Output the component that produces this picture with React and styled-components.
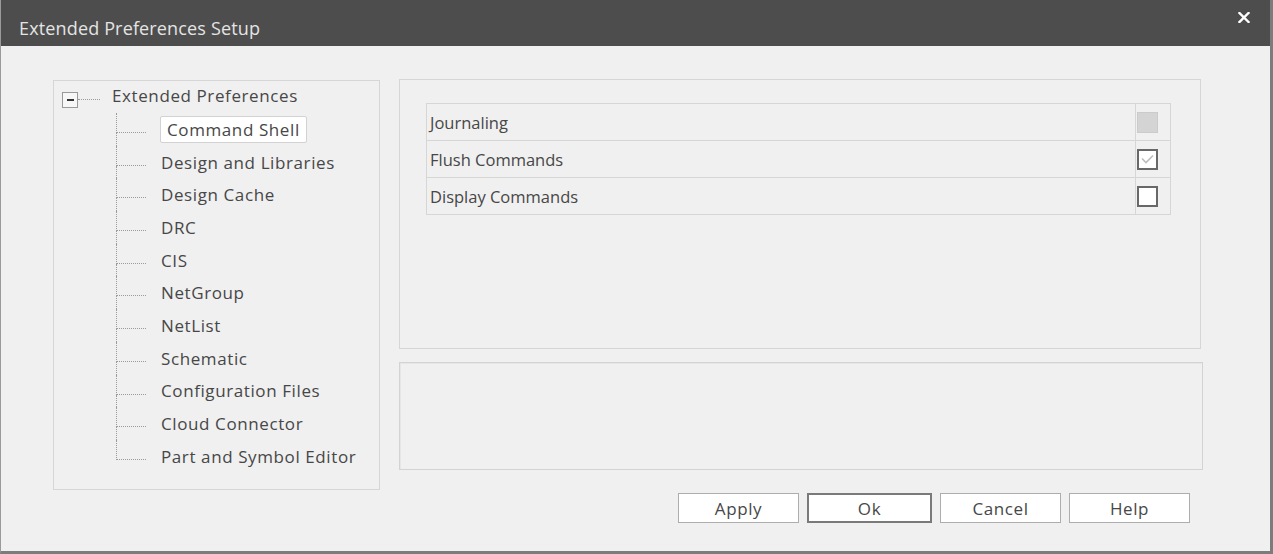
import React from "react";
import styled, { createGlobalStyle } from "styled-components";

const Global = createGlobalStyle`
  html, body { margin: 0; padding: 0; background: #f0f0f0; }
  * { box-sizing: border-box; }
`;

const Window = styled.div`
  width: 1273px;
  height: 554px;
  display: flex;
  flex-direction: column;
  background: #f0f0f0;
  border-left: 1px solid #9a9a9a;
  border-right: 3px solid #7c7c7c;
  border-bottom: 3px solid #7c7c7c;
  font-family: "Open Sans", "Noto Sans", sans-serif;
  color: #474747;
`;

const TitleBar = styled.div`
  height: 46px;
  flex: none;
  background: #4d4d4d;
  display: flex;
  justify-content: space-between;
  padding: 0 20px 0 18px;
`;

const Title = styled.div`
  align-self: flex-end;
  padding-bottom: 6px;
  line-height: 24px;
  font-size: 18px;
  letter-spacing: 0.15px;
  color: #e4e4e4;
`;

const Close = styled.svg`
  margin-top: 12px;
  width: 12px;
  height: 11px;
`;

const Body = styled.div`
  flex: 1;
  display: flex;
  padding: 34px 0 0 52px;
  gap: 19px;
`;

const TreePanel = styled.div`
  width: 327px;
  height: 410px;
  border: 1px solid #d6d6d6;
  padding: 0 0 0 8px;
  display: flex;
  flex-direction: column;
`;

const RootRow = styled.div`
  height: 32px;
  display: flex;
  align-items: center;
`;

const ExpandBox = styled.div`
  width: 16px;
  height: 16px;
  margin-top: 5px;
  border: 1px solid #9a9a9a;
  background: #f7f7f7;
  display: flex;
  align-items: center;
  justify-content: center;
  &::after {
    content: "";
    width: 7px;
    height: 2px;
    background: #333;
  }
`;

const RootLink = styled.div`
  width: 22px;
  margin-top: 4px;
  border-top: 1px dotted #9a9a9a;
`;

const Label = styled.div`
  font-size: 17px;
  letter-spacing: 0.6px;
  color: #474747;
  white-space: nowrap;
  line-height: 25px;
  padding: 0 ${(p) => (p.$selected ? "6px" : "0")};
  border: 1px solid ${(p) => (p.$selected ? "#d2d2d2" : "transparent")};
  border-radius: 2px;
  background: ${(p) => (p.$selected ? "#ffffff" : "transparent")};
  margin-left: ${(p) => (p.$selected ? "0" : "-1px")};
`;

const RootLabel = styled(Label)`
  margin-left: 11px;
  margin-top: -4px;
`;

const Children = styled.div`
  display: flex;
  flex-direction: column;
  margin-left: 54px;
`;

const ChildRow = styled.div`
  height: 32.7px;
  display: flex;
  align-items: center;
`;

const Connector = styled.div`
  width: 30px;
  align-self: stretch;
  display: flex;
  flex-direction: column;
`;

const ConnTop = styled.div`
  height: 20px;
  border-left: 1px dotted #9a9a9a;
  border-bottom: 1px dotted #9a9a9a;
`;

const ConnBottom = styled.div`
  flex: 1;
  border-left: 1px dotted ${(p) => (p.$last ? "transparent" : "#9a9a9a")};
`;

const ChildLabel = styled(Label)`
  margin-left: 14px;
`;

const RightColumn = styled.div`
  display: flex;
  flex-direction: column;
  margin-top: -1px;
`;

const TopPanel = styled.div`
  width: 802px;
  height: 270px;
  border: 1px solid #d6d6d6;
  padding: 23px 0 0 26px;
`;

const Table = styled.div`
  width: 745px;
  border-top: 1px solid #d6d6d6;
  border-left: 1px solid #d6d6d6;
`;

const Row = styled.div`
  height: 37px;
  display: flex;
`;

const NameCell = styled.div`
  flex: 1;
  border-right: 1px solid #d6d6d6;
  border-bottom: 1px solid #d6d6d6;
  padding-left: 3px;
  display: flex;
  align-items: center;
  font-size: 16.5px;
  color: #474747;
`;

const CheckCell = styled.div`
  width: 35px;
  border-right: 1px solid #d6d6d6;
  border-bottom: 1px solid #d6d6d6;
  display: flex;
  align-items: center;
  padding-left: 1px;
`;

const CheckBox = styled.div`
  width: 21px;
  height: 21px;
  border: ${(p) => (p.$disabled ? "1px solid #cbcbcb" : "2px solid #686868")};
  background: ${(p) => (p.$disabled ? "#d4d4d4" : "#ffffff")};
  display: flex;
  align-items: center;
  justify-content: center;
`;

const BottomPanel = styled.div`
  width: 804px;
  height: 108px;
  margin-top: 13px;
  border: 1px solid #d3d3d3;
  box-shadow: inset 1px 1px 0 #e6e6e6;
`;

const ButtonRow = styled.div`
  display: flex;
  justify-content: flex-end;
  gap: 8px;
  margin-top: 23px;
  padding-right: 13px;
`;

const Button = styled.button`
  width: ${(p) => (p.$default ? "125px" : "121px")};
  height: 30px;
  background: #ffffff;
  border: ${(p) => (p.$default ? "2px solid #7a7a7a" : "1px solid #adadad")};
  font-family: "Open Sans", "Noto Sans", sans-serif;
  font-size: 17px;
  color: #474747;
  padding: 0;
  letter-spacing: 0.6px;
`;

const children = [
  "Command Shell",
  "Design and Libraries",
  "Design Cache",
  "DRC",
  "CIS",
  "NetGroup",
  "NetList",
  "Schematic",
  "Configuration Files",
  "Cloud Connector",
  "Part and Symbol Editor",
];

const options = [
  { name: "Journaling", state: "disabled" },
  { name: "Flush Commands", state: "checked" },
  { name: "Display Commands", state: "off" },
];

export default function App() {
  return (
    <>
      <Global />
      <Window>
        <TitleBar>
          <Title>Extended Preferences Setup</Title>
          <Close viewBox="0 0 12 11">
            <path d="M1.5 1 L10.5 10 M10.5 1 L1.5 10" stroke="#ffffff" strokeWidth="2.4" strokeLinecap="square" />
          </Close>
        </TitleBar>
        <Body>
          <TreePanel>
            <RootRow>
              <ExpandBox />
              <RootLink />
              <RootLabel>Extended Preferences</RootLabel>
            </RootRow>
            <Children>
              {children.map((c, i) => (
                <ChildRow key={c}>
                  <Connector>
                    <ConnTop />
                    <ConnBottom $last={i === children.length - 1} />
                  </Connector>
                  <ChildLabel $selected={i === 0}>{c}</ChildLabel>
                </ChildRow>
              ))}
            </Children>
          </TreePanel>
          <RightColumn>
            <TopPanel>
              <Table>
                {options.map((o) => (
                  <Row key={o.name}>
                    <NameCell>{o.name}</NameCell>
                    <CheckCell>
                      <CheckBox $disabled={o.state === "disabled"}>
                        {o.state === "checked" && (
                          <svg width="13" height="10" viewBox="0 0 13 10">
                            <path d="M1 4.5 L5 8.5 L12 1.5" fill="none" stroke="#bdbdbd" strokeWidth="1.6" />
                          </svg>
                        )}
                      </CheckBox>
                    </CheckCell>
                  </Row>
                ))}
              </Table>
            </TopPanel>
            <BottomPanel />
            <ButtonRow>
              <Button>Apply</Button>
              <Button $default>Ok</Button>
              <Button>Cancel</Button>
              <Button>Help</Button>
            </ButtonRow>
          </RightColumn>
        </Body>
      </Window>
    </>
  );
}
